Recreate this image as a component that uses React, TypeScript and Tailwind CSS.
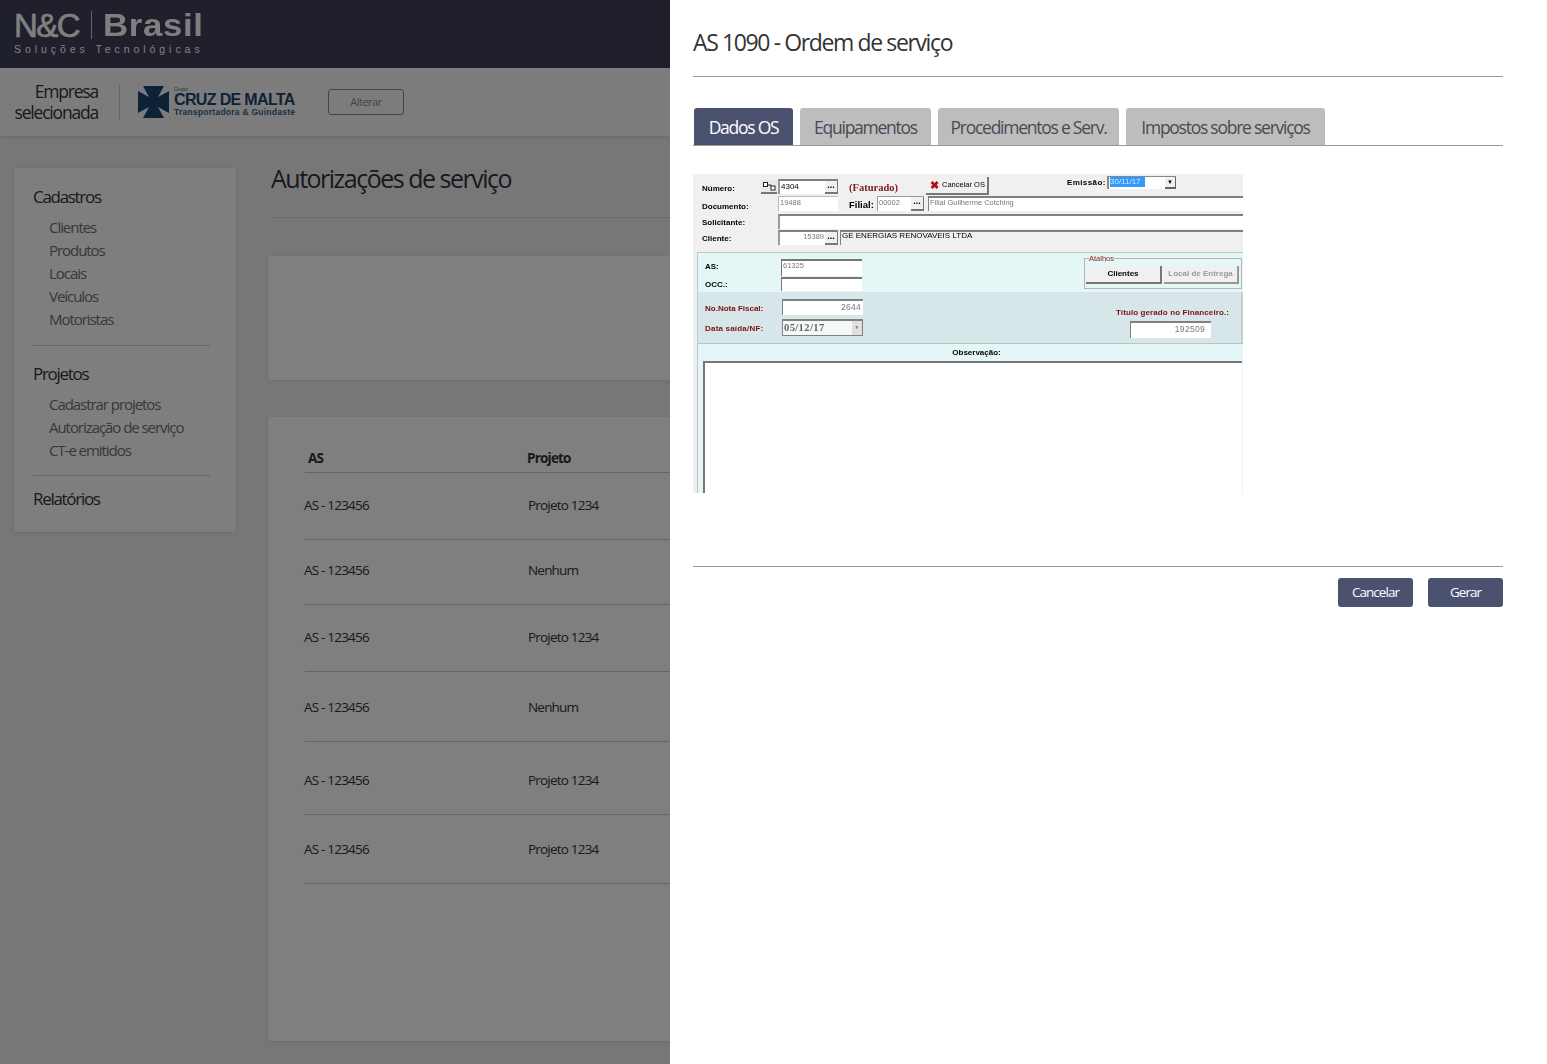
import React from 'react';

const cadastros = ['Clientes', 'Produtos', 'Locais', 'Veículos', 'Motoristas'];
const projetos = ['Cadastrar projetos', 'Autorização de serviço', 'CT-e emitidos'];

const rows = [
  { projeto: 'Projeto 1234', cls: 'h-[67px] pt-[22px]' },
  { projeto: 'Nenhum', cls: 'h-[65px] pt-[20px]' },
  { projeto: 'Projeto 1234', cls: 'h-[67px] pt-[22px]' },
  { projeto: 'Nenhum', cls: 'h-[70px] pt-[25px]' },
  { projeto: 'Projeto 1234', cls: 'h-[73px] pt-[28px]' },
  { projeto: 'Projeto 1234', cls: 'h-[69px] pt-[24px]' },
];

const legacyLabel = "font-['Liberation_Sans',sans-serif] text-[8px] font-bold text-black leading-none";
const legacyRed = "font-['Liberation_Sans',sans-serif] text-[8px] font-bold text-[#7a1010] leading-none";
const sunken = 'border-t-2 border-l-2 border-t-[#808080] border-l-[#999] bg-white';
const dots = 'w-[13px] shrink-0 bg-[#f0f0f0] border-b-2 border-r border-[#777] text-[9px] font-bold leading-[8px] text-center text-black';

const MalteseCross = () => (
  <svg width="31" height="32" viewBox="0 0 31 32">
    <path d="M5 0H26L20 11L31 5V27L20 21L26 32H5L11 21L0 27V5L11 11Z" fill="#1a4470" />
  </svg>
);

const LegacyForm = () => (
  <div className="w-[550px] h-[319px] bg-[#f0f0f0] overflow-hidden text-black font-['Liberation_Sans',sans-serif] blur-[0.25px]">
    {/* linha topo */}
    <div className="flex h-[22px] pl-[9px]">
      <span className={`${legacyLabel} w-[59px] mt-[11px]`}>Número:</span>
      <div className="w-[16px] h-[14px] mt-[6px] bg-[#e8e8e8] border-b-2 border-[#777] flex items-center justify-center">
        <svg width="13" height="9" viewBox="0 0 13 9"><rect x="0.5" y="0.5" width="4" height="4" fill="#fff" stroke="#223" /><rect x="8" y="4" width="4" height="4" fill="#fff" stroke="#223" /><path d="M5 3H8V4" stroke="#223" fill="none" /></svg>
      </div>
      <div className={`${sunken} ml-[1px] w-[60px] h-[15px] mt-[5px] flex`}>
        <span className="flex-1 text-[8px] leading-[11px] pl-[1px]">4304</span>
        <span className={dots}>...</span>
      </div>
      <span className="ml-[11px] mt-[8px] w-[77px] font-['Liberation_Serif',serif] font-bold text-[10.5px] leading-[12px] text-[#7a1a1a]">(Faturado)</span>
      <div className="mt-[3px] w-[63px] h-[18px] bg-[#f0f0f0] border-r-2 border-b-2 border-[#777] flex items-center pl-[4px] gap-[3px]">
        <span className="text-[#b01010] text-[11px] font-bold leading-none">✖</span>
        <span className="text-[7.5px] leading-none whitespace-nowrap">Cancelar OS</span>
      </div>
      <span className={`${legacyLabel} ml-[78px] w-[40px] mt-[5px] tracking-[0.4px] whitespace-nowrap`}>Emissão:</span>
      <div className="mt-[2px] w-[69px] h-[13px] bg-white border-l-2 border-t border-[#888] flex">
        <span className="ml-[1px] h-[10px] w-[35px] bg-[#3399ff] text-[8px] leading-[10px] text-[#cfe6ff]">30/11/17</span>
        <span className="ml-auto w-[11px] bg-[#f0f0f0] border-r border-b-2 border-[#666] text-[6px] leading-[10px] text-center">▼</span>
      </div>
    </div>
    <div className="flex h-[18px] pl-[9px]">
      <span className={`${legacyLabel} w-[76px] mt-[7px]`}>Documento:</span>
      <div className="w-[60px] h-[15px] bg-white border-l border-t border-[#bbb] text-[7.5px] leading-[12px] text-[#777] pl-[1px]">19488</div>
      <span className="ml-[11px] mt-[3px] w-[28px] text-[9.5px] font-bold leading-[12px]">Filial:</span>
      <div className="w-[47px] h-[15px] flex bg-white border-l border-t border-[#999]">
        <span className="flex-1 text-[7.5px] leading-[12px] text-[#777] pl-[1px]">00002</span>
        <span className={dots}>...</span>
      </div>
      <div className="ml-[4px] flex-1 h-[15px] bg-white border-t-2 border-l border-[#808080] text-[7.5px] leading-[10px] text-[#777] pl-[1px]">Filial Guilherme Cotching</div>
    </div>
    <div className="flex h-[16px] pl-[9px]">
      <span className={`${legacyLabel} w-[76px] mt-[5px]`}>Solicitante:</span>
      <div className={`${sunken} flex-1 h-[15px]`} />
    </div>
    <div className="flex h-[22px] pl-[9px]">
      <span className={`${legacyLabel} w-[76px] mt-[5px]`}>Cliente:</span>
      <div className={`${sunken} w-[60px] h-[15px] flex`}>
        <span className="flex-1 text-right pr-[1px] text-[7.5px] leading-[10px] text-[#777]">15389</span>
        <span className={dots}>...</span>
      </div>
      <div className="ml-[2px] flex-1 h-[15px] bg-[#f0f0f0] border-t-2 border-l border-[#808080] text-[8px] leading-[8px] pl-[1px] whitespace-nowrap">GE ENERGIAS RENOVAVEIS LTDA</div>
    </div>

    {/* painel azul */}
    <div className="ml-[4px] h-[241px] bg-[#e5f6f6] border-t border-l border-[#b9c9c9]">
      <div className="flex h-[39px] pl-[7px]">
        <div className="w-[76px]">
          <div className={`${legacyLabel} mt-[10px]`}>AS:</div>
          <div className={`${legacyLabel} mt-[10px]`}>OCC.:</div>
        </div>
        <div className="w-[81px]">
          <div className="mt-[6px] h-[17px] bg-white border-t-2 border-l border-[#777] text-[7.5px] leading-[10px] text-[#777] pl-[1px]">61325</div>
          <div className="mt-[1px] h-[14px] bg-white border-t-2 border-l border-[#777]" />
        </div>
        <div className="relative ml-[222px] mt-[5px] w-[158px] h-[31px] border border-[#b5b5b5] flex gap-[2px] pl-[1px] pt-[7px]">
          <span className="absolute -top-[4px] left-[4px] bg-[#e5f6f6] text-[7.5px] leading-[8px] text-[#8a2020]">Atalhos</span>
          <div className="w-[76px] h-[18px] bg-[#f0f0f0] border-r-2 border-b-2 border-[#777] text-center text-[8px] font-bold leading-[16px]">Clientes</div>
          <div className="w-[75px] h-[18px] bg-[#f0f0f0] border-r-2 border-b-2 border-[#999] text-center text-[8px] font-bold leading-[16px] text-[#9a9a9a] whitespace-nowrap">Local de Entrega</div>
        </div>
      </div>
      <div className="flex h-[51px] pl-[7px] bg-[#d7e7e9] border-r-2 border-[#c5cfd0]">
        <div className="w-[77px]">
          <div className={`${legacyRed} mt-[13px]`}>No.Nota Fiscal:</div>
          <div className={`${legacyRed} mt-[12px] tracking-[0.2px]`}>Data saída/NF:</div>
        </div>
        <div className="w-[81px]">
          <div className="mt-[7px] h-[16px] bg-white border-t-2 border-l border-[#808080] text-right text-[8.5px] leading-[12px] text-[#777] pr-[2px] tracking-[0.3px]">2644</div>
          <div className="mt-[4px] h-[17px] bg-[#f4f8f8] border-t-2 border-l border-r border-b border-[#808080] flex justify-between font-['Liberation_Serif',serif] text-[10.5px] font-bold leading-[13px] text-[#666] pl-[1px] tracking-[0.4px]">
            05/12/17
            <span className="w-[10px] bg-[#e0e0e0] text-[5px] leading-[13px] text-center text-[#777] font-['Liberation_Sans',sans-serif]">▼</span>
          </div>
        </div>
        <div className="ml-[246px] w-[120px] flex flex-col items-end">
          <span className={`${legacyRed} mt-[17px] whitespace-nowrap tracking-[0.1px]`}>Título gerado no Financeiro.:</span>
          <div className="mt-[4px] mr-[18px] w-[81px] h-[17px] bg-white border-t-2 border-l border-[#808080] text-right text-[8.5px] leading-[13px] text-[#777] pr-[6px] tracking-[0.3px]">192509</div>
        </div>
      </div>
      <div className="border-t border-[#b5c5c5] pt-[5px] h-[18px] text-center pl-[12px] leading-none">
        <span className={`${legacyLabel} block`}>Observação:</span>
      </div>
      <div className="ml-[5px] mr-[1px] h-[140px] bg-white border-t-2 border-l-2 border-[#777]" />
    </div>
  </div>
);

export default function App() {
  return (
    <div className="relative h-[1064px] w-full overflow-hidden bg-[#eeeef3] font-['Open_Sans',sans-serif]">
      {/* topo */}
      <header className="h-[68px] bg-[#3e4056] pl-[14px] pt-[8px] text-white">
        <div className="flex items-center h-[34px] w-[195px] leading-none">
          <span className="font-['Liberation_Sans',sans-serif] text-[33px] tracking-[-1.5px] w-[72px] [-webkit-text-stroke:0.6px_white]">N&amp;C</span>
          <span className="w-px h-[28px] bg-white/70 ml-[5px] mr-[11px]" />
          <span className="font-['Liberation_Sans',sans-serif] font-bold text-[32px] tracking-[0.6px] origin-left scale-x-[1.087]">Brasil</span>
        </div>
        <div className="font-['Liberation_Sans',sans-serif] text-[10.5px] leading-none mt-[2px] tracking-[3.95px] whitespace-nowrap">Soluções Tecnológicas</div>
      </header>
      <div className="h-[68px] bg-[#f9f9f9] shadow-[0_1px_4px_rgba(0,0,0,0.12)] flex items-center">
        <div className="w-[98px] text-right text-[17.5px] leading-[21px] tracking-[-1.2px] text-[#333]">Empresa<br />selecionada</div>
        <span className="ml-[21px] w-px h-[37px] bg-[#ccc]" />
        <div className="ml-[18px] flex items-center">
          <MalteseCross />
          <div className="ml-[5px] w-[124px] font-['Liberation_Sans',sans-serif] text-[#1a4470] leading-none">
            <div className="text-[5px] text-[#555] h-[5px]">Grupo</div>
            <div className="text-[16px] font-bold tracking-[-0.65px] h-[16px] whitespace-nowrap">CRUZ DE MALTA</div>
            <div className="text-[8.5px] font-bold tracking-[0.25px] text-[#3a5f85] whitespace-nowrap">Transportadora &amp; Guindaste</div>
          </div>
        </div>
        <button className="ml-[30px] w-[76px] h-[26px] border border-[#888] rounded-[3px] text-[11px] tracking-[-0.5px] text-[#888]">Alterar</button>
      </div>

      <div className="flex pt-[32px] pl-[14px]">
        {/* menu lateral */}
        <aside className="w-[222px] h-[364px] shrink-0 bg-[#fdfdfd] rounded-[3px] shadow-[0_1px_4px_rgba(0,0,0,0.1)] pl-[19px] pt-[17px]">
          <h3 className="text-[17px] leading-[24px] tracking-[-1.3px] text-[#333]">Cadastros</h3>
          <ul className="mt-[7px] ml-[16px]">
            {cadastros.map((c) => (
              <li key={c} className="h-[23px] text-[15px] leading-[23px] tracking-[-1.05px] text-[#6f6f7c]">{c}</li>
            ))}
          </ul>
          <div className="mt-[14px] w-[177px] border-t border-[#ccc]" />
          <h3 className="mt-[16px] text-[17px] leading-[24px] tracking-[-1.3px] text-[#333]">Projetos</h3>
          <ul className="mt-[7px] ml-[16px]">
            {projetos.map((c) => (
              <li key={c} className="h-[23px] text-[15px] leading-[23px] tracking-[-1.05px] text-[#6f6f7c] whitespace-nowrap">{c}</li>
            ))}
          </ul>
          <div className="mt-[13px] w-[177px] border-t border-[#ccc]" />
          <h3 className="mt-[11px] text-[17px] leading-[24px] tracking-[-1.3px] text-[#333]">Relatórios</h3>
        </aside>

        {/* conteudo */}
        <main className="ml-[32px] flex-1 pr-[32px] min-w-0">
          <h1 className="ml-[3px] -mt-[8px] text-[25px] leading-[36px] tracking-[-1.5px] text-[#333]">Autorizações de serviço</h1>
          <div className="ml-[5px] mt-[21px] border-t border-[#d5d5d8]" />
          <div className="mt-[38px] h-[124px] rounded-[3px] bg-[#fefefe] shadow-[0_1px_4px_rgba(0,0,0,0.1)]" />
          <section className="mt-[37px] h-[624px] rounded-[3px] bg-[#fefefe] shadow-[0_1px_4px_rgba(0,0,0,0.1)] pl-[37px] pt-[31px]">
            <div className="flex h-[25px] border-b border-[#ccc] text-[13.5px] leading-[20px] font-bold tracking-[-0.8px] text-[#333]">
              <span className="w-[222px] pl-[3px]">AS</span>
              <span>Projeto</span>
            </div>
            {rows.map((r, i) => (
              <div key={i} className={`${r.cls} flex border-b border-[#ccc] text-[13.5px] leading-[20px] tracking-[-0.8px] text-[#333]`}>
                <span className="w-[224px] -ml-[1px]">AS - 123456</span>
                <span>{r.projeto}</span>
              </div>
            ))}
          </section>
        </main>
      </div>

      {/* escurecimento + painel lateral */}
      <div className="absolute inset-0 bg-black/50" />
      <div className="absolute top-0 right-0 bottom-0 left-[670px] bg-white pl-[23px] pr-[44px]">
        <h2 className="h-[77px] border-b border-[#999] pt-[26px] text-[23px] leading-[32px] tracking-[-1.38px] text-[#333]">AS 1090 - Ordem de serviço</h2>
        <div className="mt-[31px] flex gap-[7px] pl-[1px] h-[38px] border-b border-[#999]">
          <div className="w-[99px] h-[37px] rounded-t-[3px] bg-[#4b526f] text-white text-center text-[17.5px] leading-[39px] tracking-[-1.25px]">Dados OS</div>
          <div className="w-[131px] h-[37px] rounded-t-[3px] bg-[#bdbdbd] text-[#4a4a55] text-center text-[17.5px] leading-[39px] tracking-[-1.25px]">Equipamentos</div>
          <div className="w-[181px] h-[37px] rounded-t-[3px] bg-[#bdbdbd] text-[#4a4a55] text-center text-[17.5px] leading-[39px] tracking-[-1.25px] whitespace-nowrap">Procedimentos e Serv.</div>
          <div className="w-[199px] h-[37px] rounded-t-[3px] bg-[#bdbdbd] text-[#4a4a55] text-center text-[17.5px] leading-[39px] tracking-[-1.25px] whitespace-nowrap">Impostos sobre serviços</div>
        </div>
        <div className="mt-[28px]">
          <LegacyForm />
        </div>
        <div className="mt-[73px] border-t border-[#999] pt-[11px] flex justify-end gap-[15px]">
          <button className="w-[75px] h-[29px] rounded-[3px] bg-[#4b526f] text-white text-[13.5px] tracking-[-0.95px]">Cancelar</button>
          <button className="w-[75px] h-[29px] rounded-[3px] bg-[#4b526f] text-white text-[13.5px] tracking-[-0.95px]">Gerar</button>
        </div>
      </div>
    </div>
  );
}
